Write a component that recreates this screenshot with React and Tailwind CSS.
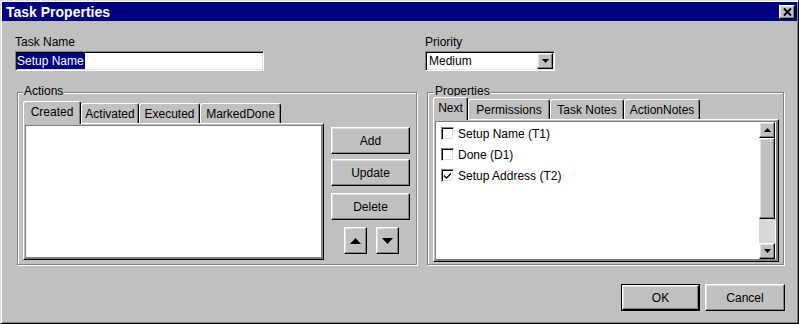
import React from 'react';

// Win95-style bevels
const raised = "border border-t-white border-l-white border-r-black border-b-black shadow-[inset_-1px_-1px_0_#808080,inset_1px_1px_0_#dfdfdf] bg-[#c0c0c0]";
const sunken = "border border-t-[#808080] border-l-[#808080] border-r-white border-b-white shadow-[inset_1px_1px_0_#000,inset_-1px_-1px_0_#dfdfdf]";
const etched = "border border-[#808080] shadow-[inset_1px_1px_0_#fff,1px_1px_0_#fff]";

function Tri({ dir = 'down', w = 7, h = 4 }) {
    const pts = dir === 'down' ? `0,0 ${w},0 ${w / 2},${h}` : `0,${h} ${w},${h} ${w / 2},0`;
    return (
        <svg width={w} height={h} viewBox={`0 0 ${w} ${h}`} className="block">
            <polygon points={pts} fill="#000" />
        </svg>
    );
}

function Button({ children, className = '' }) {
    return (
        <div className={`${raised} flex items-center justify-center text-[12px] leading-[14px] ${className}`}>
            {children}
        </div>
    );
}

function Tab({ label, active, width }) {
    return (
        <div
            style={{ width }}
            className={`border border-b-0 border-t-white border-l-white border-r-black shadow-[inset_-1px_0_0_#808080] rounded-t-[3px] bg-[#c0c0c0] flex justify-center text-[12px] leading-[14px] ${active ? 'relative z-10 h-[23px] -mb-[1px] pt-[3px]' : 'h-[20px] pt-[3px]'}`}
        >
            {label}
        </div>
    );
}

function Panel({ className = '', children }) {
    return (
        <div className={`border border-t-white border-l-white border-r-black border-b-black shadow-[inset_-1px_-1px_0_#808080] bg-[#c0c0c0] p-[1px] ${className}`}>
            <div className="w-full h-full border border-[#808080] bg-white flex">
                {children}
            </div>
        </div>
    );
}

function Check({ label, checked }) {
    return (
        <div className="h-[21px] flex items-center gap-[4px]">
            <div className={`${sunken} w-[13px] h-[13px] bg-white flex items-center justify-center`}>
                {checked && (
                    <svg width="7" height="7" viewBox="0 0 7 7" className="block">
                        <path d="M0 2.5 L2.5 5 L7 0.5 L7 2.5 L2.5 7 L0 4.5 Z" fill="#000" />
                    </svg>
                )}
            </div>
            <span className="text-[12px] leading-[14px]">{label}</span>
        </div>
    );
}

export default function App() {
    return (
        <div className="w-[799px] h-[324px] bg-[#c0c0c0] border border-t-[#dfdfdf] border-l-[#dfdfdf] border-r-black border-b-black shadow-[inset_1px_1px_0_#fff,inset_-1px_-1px_0_#808080] p-[1px] flex flex-col text-black font-['Liberation_Sans',Arial,sans-serif]">
            {/* title bar */}
            <div className="h-[19px] bg-[#000080] flex items-center justify-between pl-[4px] pr-[2px]">
                <span className="text-white font-bold text-[14px] leading-[16px]">Task Properties</span>
                <div className={`${raised} w-[16px] h-[14px] flex items-center justify-center`}>
                    <svg width="9" height="8" viewBox="0 0 9 8" className="block">
                        <path d="M1 0.5 L8 7.5 M8 0.5 L1 7.5" stroke="#000" strokeWidth="2" />
                    </svg>
                </div>
            </div>

            {/* name + priority */}
            <div className="flex pl-[13px] pt-[14px]">
                <div className="w-[410px] flex flex-col">
                    <span className="text-[12px] leading-[14px] mb-[2px]">Task Name</span>
                    <div className={`${sunken} w-[249px] h-[20px] bg-white p-[1px] flex`}>
                        <span className="bg-[#000080] text-white text-[12px] leading-[16px] pr-[1px]">Setup Name</span>
                    </div>
                </div>
                <div className="flex flex-col">
                    <span className="text-[12px] leading-[14px] mb-[2px]">Priority</span>
                    <div className={`${sunken} w-[130px] h-[20px] bg-white p-[1px] flex`}>
                        <span className="flex-1 text-[12px] leading-[16px] pl-[2px]">Medium</span>
                        <div className={`${raised} w-[16px] h-[16px] flex items-center justify-center`}>
                            <Tri dir="down" w={7} h={4} />
                        </div>
                    </div>
                </div>
            </div>

            {/* group boxes */}
            <div className="flex pl-[15px] mt-[21px]">
                <div className={`${etched} relative w-[400px] h-[173px] pl-[5px] pt-[8px] flex`}>
                    <span className="absolute left-[5px] top-[-9px] px-[1px] bg-[#c0c0c0] text-[12px] leading-[14px]">Actions</span>
                    <div className="flex flex-col">
                        <div className="flex items-end">
                            <Tab label="Created" active width={58} />
                            <Tab label="Activated" width={58} />
                            <Tab label="Executed" width={61} />
                            <Tab label="MarkedDone" width={81} />
                        </div>
                        <Panel className="w-[301px] h-[137px]" />
                    </div>
                    <div className="flex flex-col ml-[7px] pt-[26px]">
                        <Button className="w-[79px] h-[27px] mb-[5px]">Add</Button>
                        <Button className="w-[79px] h-[27px] mb-[7px]">Update</Button>
                        <Button className="w-[79px] h-[27px] mb-[7px]">Delete</Button>
                        <div className="flex pl-[13px] gap-[9px]">
                            <Button className="w-[23px] h-[27px]"><Tri dir="up" w={11} h={6} /></Button>
                            <Button className="w-[23px] h-[27px]"><Tri dir="down" w={11} h={6} /></Button>
                        </div>
                    </div>
                </div>

                <div className={`${etched} relative w-[357px] h-[173px] ml-[10px] pl-[5px] pt-[4px]`}>
                    <span className="absolute left-[6px] top-[-9px] px-[1px] h-[12px] overflow-hidden bg-[#c0c0c0] text-[12px] leading-[14px]">Properties</span>
                    <div className="flex items-end">
                        <Tab label="Next" active width={35} />
                        <Tab label="Permissions" width={82} />
                        <Tab label="Task Notes" width={74} />
                        <Tab label="ActionNotes" width={76} />
                    </div>
                    <Panel className="w-[346px] h-[143px]">
                        <div className="flex-1 pl-[5px] pt-[1px] flex flex-col">
                            <Check label="Setup Name (T1)" />
                            <Check label="Done (D1)" />
                            <Check label="Setup Address (T2)" checked />
                        </div>
                        <div className="w-[16px] flex flex-col mr-[1px]">
                            <div className={`${raised} h-[16px] flex items-center justify-center`}><Tri dir="up" w={7} h={4} /></div>
                            <div className={`${raised} h-[81px]`} />
                            <div className="flex-1 bg-[#d8d8d8]" />
                            <div className={`${raised} h-[16px] flex items-center justify-center`}><Tri dir="down" w={7} h={4} /></div>
                        </div>
                    </Panel>
                </div>
            </div>

            {/* dialog buttons */}
            <div className="flex justify-end gap-[5px] pr-[12px] mt-[19px]">
                <div className="border border-black">
                    <Button className="w-[77px] h-[25px]">OK</Button>
                </div>
                <Button className="w-[80px] h-[27px]">Cancel</Button>
            </div>
        </div>
    );
}
